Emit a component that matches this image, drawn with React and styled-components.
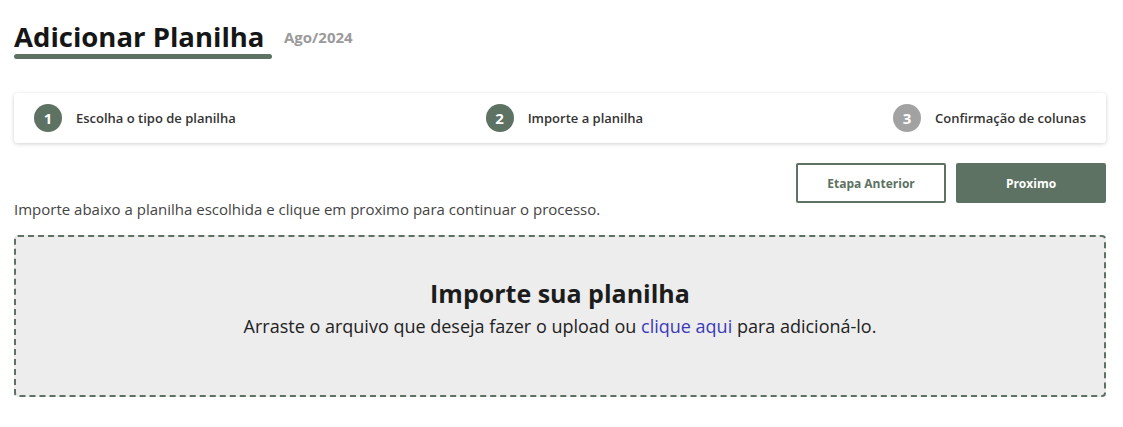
import React from 'react';
import styled, { createGlobalStyle } from 'styled-components';

const green = '#5d7263';

const Global = createGlobalStyle`
  body {
    margin: 0;
    background: #fff;
    font-family: "Open Sans", Lato, sans-serif;
    color: #222;
  }
`;

const Page = styled.div`
  padding: 20px 17px 0 14px;
`;

const Header = styled.div`
  display: flex;
  align-items: flex-start;
  gap: 12px;
`;

const Title = styled.h1`
  margin: 0;
  font-size: 27.5px;
  font-weight: 700;
  color: #161616;
  line-height: 34px;
  padding-bottom: 1px;
  &::after {
    content: '';
    display: block;
    height: 5px;
    width: 258px;
    border-radius: 3px;
    background: ${green};
  }
`;

const Period = styled.span`
  font-size: 15px;
  font-weight: 700;
  color: #9a9a9a;
  margin-top: 7px;
`;

const Stepper = styled.div`
  margin-top: 33px;
  height: 50px;
  background: #fff;
  border-radius: 4px;
  box-shadow: 0 1px 4px rgba(0, 0, 0, 0.18);
  display: flex;
  align-items: center;
  justify-content: space-between;
  padding: 0 20px;
`;

const Step = styled.div`
  display: flex;
  align-items: center;
  gap: 14px;
  font-size: 13px;
  font-weight: 600;
  color: #333;
`;

const Circle = styled.span`
  width: 28px;
  height: 28px;
  border-radius: 50%;
  background: ${p => (p.$active ? green : '#a2a2a2')};
  color: #fff;
  font-size: 15px;
  font-weight: 700;
  display: flex;
  align-items: center;
  justify-content: center;
`;

const Actions = styled.div`
  margin-top: 20px;
  display: flex;
  justify-content: flex-end;
  gap: 10px;
`;

const Button = styled.button`
  width: 150px;
  height: 40px;
  border: 2px solid ${green};
  border-radius: 2px;
  background: ${p => (p.$primary ? green : '#fff')};
  color: ${p => (p.$primary ? '#fff' : green)};
  font-family: inherit;
  font-size: 12px;
  font-weight: 700;
  cursor: pointer;
`;

const Hint = styled.p`
  margin: -3px 0 0;
  font-size: 15px;
  color: #444;
  line-height: 18px;
`;

const Dropzone = styled.div`
  margin-top: 17px;
  height: 162px;
  box-sizing: border-box;
  padding-bottom: 18px;
  background: #ededed;
  border: 2px dashed ${green};
  border-radius: 4px;
  display: flex;
  flex-direction: column;
  align-items: center;
  justify-content: center;
  gap: 4px;
`;

const DropTitle = styled.h2`
  margin: 0;
  font-size: 25px;
  font-weight: 700;
  color: #1c1c1c;
`;

const DropText = styled.p`
  margin: 0;
  font-size: 18px;
  color: #222;
`;

const Link = styled.a`
  color: #3a3ab8;
  text-decoration: none;
  cursor: pointer;
`;

const steps = [
  { n: 1, label: 'Escolha o tipo de planilha', active: true },
  { n: 2, label: 'Importe a planilha', active: true },
  { n: 3, label: 'Confirmação de colunas', active: false },
];

export default function App() {
  return (
    <Page>
      <Global />
      <Header>
        <Title>Adicionar Planilha</Title>
        <Period>Ago/2024</Period>
      </Header>
      <Stepper>
        {steps.map(s => (
          <Step key={s.n}>
            <Circle $active={s.active}>{s.n}</Circle>
            {s.label}
          </Step>
        ))}
      </Stepper>
      <Actions>
        <Button>Etapa Anterior</Button>
        <Button $primary>Proximo</Button>
      </Actions>
      <Hint>Importe abaixo a planilha escolhida e clique em proximo para continuar o processo.</Hint>
      <Dropzone>
        <DropTitle>Importe sua planilha</DropTitle>
        <DropText>
          Arraste o arquivo que deseja fazer o upload ou <Link>clique aqui</Link> para adicioná-lo.
        </DropText>
      </Dropzone>
    </Page>
  );
}
